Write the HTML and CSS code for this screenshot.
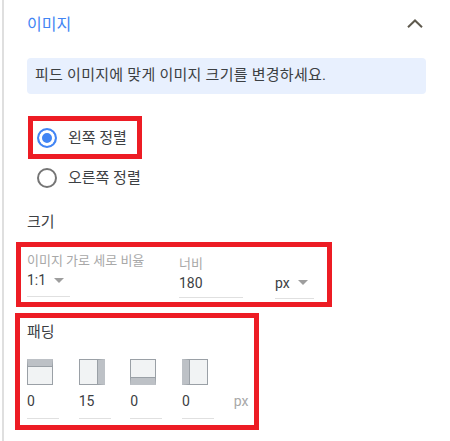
FILE: index.html
```html
<!DOCTYPE html>
<html lang="ko">
  <head>
    <meta charset="UTF-8" />
    <title>이미지</title>
    <link rel="stylesheet" href="styles.css">
  </head>
  <body>
    <div class="panel">
      <div class="header">
        <span class="title">이미지</span>
        <svg class="chevron" width="16" height="9" viewBox="0 0 16 9">
          <path d="M1 8.2 8 1.5l7 6.7" fill="none" stroke="#5f5a4e" stroke-width="2" />
        </svg>
      </div>
      <div class="notice">피드 이미지에 맞게 이미지 크기를 변경하세요.</div>

      <div class="mark mark-align">
        <label class="radio"><span class="dot checked"></span>왼쪽 정렬</label>
      </div>
      <label class="radio radio-plain"><span class="dot"></span>오른쪽 정렬</label>

      <div class="size-title">크기</div>
      <div class="mark mark-size">
        <div class="field field-ratio">
          <div class="field-label">이미지 가로 세로 비율</div>
          <div class="field-value">1:1<span class="caret"></span></div>
        </div>
        <div class="field field-width">
          <div class="field-label">너비</div>
          <div class="field-value">180</div>
        </div>
        <div class="field field-unit">
          <div class="field-value">px<span class="caret"></span></div>
        </div>
      </div>

      <div class="mark mark-padding">
        <div class="padding-title">패딩</div>
        <div class="padding-row">
          <div class="side">
            <div class="side-icon top"></div>
            <div class="side-value">0</div>
          </div>
          <div class="side">
            <div class="side-icon right"></div>
            <div class="side-value">15</div>
          </div>
          <div class="side">
            <div class="side-icon bottom"></div>
            <div class="side-value">0</div>
          </div>
          <div class="side">
            <div class="side-icon left"></div>
            <div class="side-value">0</div>
          </div>
          <div class="side-unit">px</div>
        </div>
      </div>
    </div>
  </body>
</html>
```

FILE: styles.css
```css
html,
body {
  height: 100%;
}

body {
  margin: 0;
  background-color: #fff;
  color: #3c4043;
  font-family: Roboto, "Noto Sans CJK KR", sans-serif;
  font-size: 14px;
  overflow: hidden;
}

.panel {
  box-sizing: border-box;
  height: 441px;
  margin-left: 2px;
  border-left: 2px solid #dfdfdf;
  padding-left: 11px;
  width: 448px;
}

.header {
  display: flex;
  justify-content: space-between;
  align-items: center;
  height: 46px;
  margin-left: 12px;
  width: 396px;
}

.title {
  color: #4285f4;
  font-size: 16px;
}

.notice {
  box-sizing: border-box;
  width: 399px;
  height: 36px;
  margin-top: 12px;
  margin-left: 12px;
  padding-left: 8px;
  font-size: 15px;
  letter-spacing: 0.26px;
  line-height: 35px;
  background-color: #e8f0fe;
  border-radius: 4px;
}

.mark {
  box-sizing: border-box;
  border: 5px solid #ed1c24;
}

.mark-align {
  width: 114px;
  height: 43px;
  margin-top: 22px;
  margin-left: 13px;
  padding-left: 4px;
  display: flex;
  align-items: center;
}

.radio {
  display: flex;
  align-items: center;
  gap: 11px;
  font-size: 15px;
  line-height: 20px;
}

.radio-plain {
  margin-top: 9px;
  margin-left: 22px;
}

.dot {
  box-sizing: border-box;
  width: 20px;
  height: 20px;
  border: 2px solid #757575;
  border-radius: 50%;
}

.dot.checked {
  border-color: #4285f4;
  background-color: #4285f4;
  box-shadow: inset 0 0 0 3px #fff;
}

.size-title {
  height: 18px;
  margin-top: 25px;
  margin-left: 12px;
  font-size: 15px;
  line-height: 18px;
}

.mark-size {
  display: flex;
  width: 316px;
  height: 65px;
  margin-top: 11px;
  margin-left: 1px;
  padding-left: 6px;
}

.field {
  display: flex;
  flex-direction: column;
}

.field-ratio {
  width: 43px;
  padding-top: 6px;
}

.field-width {
  width: 64px;
  margin-left: 109px;
  padding-top: 10px;
}

.field-unit {
  width: 39px;
  margin-left: 32px;
  padding-top: 24px;
}

.field-label {
  color: #a8a8a8;
  font-size: 13px;
  line-height: 16px;
  white-space: nowrap;
}

.field-width .field-label {
  line-height: 14px;
}

.field-value {
  display: flex;
  align-items: center;
  height: 23px;
  padding-bottom: 3px;
  border-bottom: 1px solid #e0e0e0;
}

.field-unit .field-value {
  padding-bottom: 4px;
}

.field-ratio .field-value {
  box-sizing: border-box;
  height: 27px;
  margin-top: 1px;
  padding-bottom: 6px;
}

.caret {
  width: 0;
  height: 0;
  margin-left: 8px;
  border-left: 5px solid transparent;
  border-right: 5px solid transparent;
  border-top: 5px solid #9e9e9e;
}

.mark-padding {
  width: 244px;
  height: 117px;
  margin-top: 6px;
  padding-left: 7px;
}

.padding-title {
  height: 37px;
  margin-top: 4px;
  font-size: 15px;
  line-height: 20px;
}

.padding-row {
  display: flex;
}

.side {
  width: 32px;
  margin-right: 19.67px;
}

.side-icon {
  box-sizing: border-box;
  width: 26px;
  height: 26px;
  border: 1px solid #9aa0a6;
  background-color: #f1f3f4;
}

.side-icon.top {
  border-top-width: 7px;
  border-top-color: #bdc1c6;
  box-shadow: inset 0 1px 0 #9aa0a6;
}

.side-icon.right {
  border-right-width: 7px;
  border-right-color: #bdc1c6;
  box-shadow: inset -1px 0 0 #9aa0a6;
}

.side-icon.bottom {
  border-bottom-width: 7px;
  border-bottom-color: #bdc1c6;
  box-shadow: inset 0 -1px 0 #9aa0a6;
}

.side-icon.left {
  border-left-width: 7px;
  border-left-color: #bdc1c6;
  box-shadow: inset 1px 0 0 #9aa0a6;
}

.side-value {
  box-sizing: border-box;
  height: 28px;
  margin-top: 6px;
  line-height: 20px;
  border-bottom: 1px solid #e0e0e0;
}

.side-unit {
  margin-top: 32px;
  color: #a8a8a8;
  line-height: 20px;
}
```
